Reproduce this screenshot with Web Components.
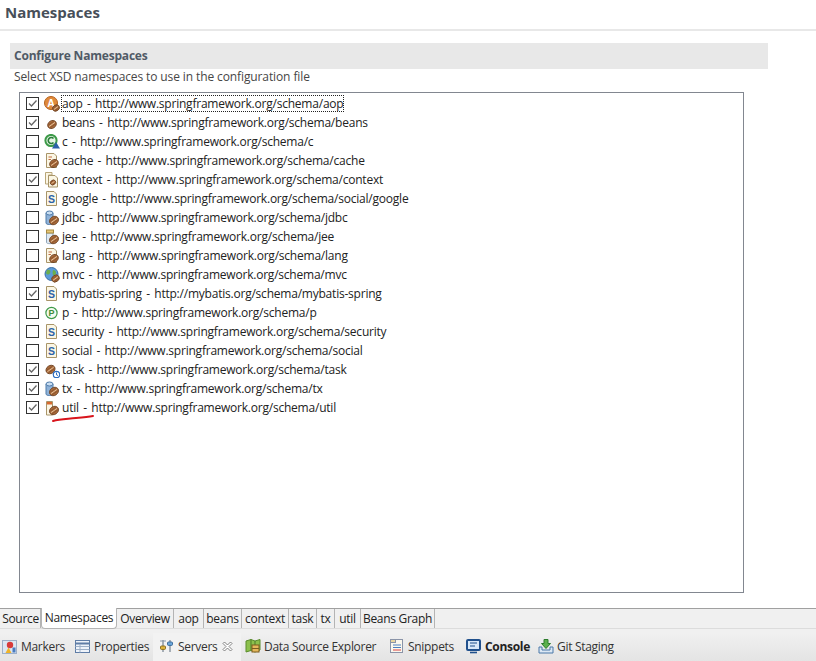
<!DOCTYPE html>
<html>
<head>
<meta charset="utf-8">
<style>
  html, body { margin: 0; padding: 0; background: #fff; }
  body { width: 816px; height: 661px; overflow: hidden; font: 12px "Open Sans", "Noto Sans CJK KR", sans-serif; color: #222; }
</style>
</head>
<body>
<ns-page>
  <ns-header>Namespaces</ns-header>
  <ns-section heading="Configure Namespaces" desc="Select XSD namespaces to use in the configuration file">
    <ns-tree>
      <ns-row name="aop" url="http://www.springframework.org/schema/aop" icon="aop" checked focused></ns-row>
      <ns-row name="beans" url="http://www.springframework.org/schema/beans" icon="bean" checked></ns-row>
      <ns-row name="c" url="http://www.springframework.org/schema/c" icon="c"></ns-row>
      <ns-row name="cache" url="http://www.springframework.org/schema/cache" icon="docbean"></ns-row>
      <ns-row name="context" url="http://www.springframework.org/schema/context" icon="context" checked></ns-row>
      <ns-row name="google" url="http://www.springframework.org/schema/social/google" icon="s"></ns-row>
      <ns-row name="jdbc" url="http://www.springframework.org/schema/jdbc" icon="db"></ns-row>
      <ns-row name="jee" url="http://www.springframework.org/schema/jee" icon="jar"></ns-row>
      <ns-row name="lang" url="http://www.springframework.org/schema/lang" icon="docbean"></ns-row>
      <ns-row name="mvc" url="http://www.springframework.org/schema/mvc" icon="globe"></ns-row>
      <ns-row name="mybatis-spring" url="http://mybatis.org/schema/mybatis-spring" icon="s" checked></ns-row>
      <ns-row name="p" url="http://www.springframework.org/schema/p" icon="p"></ns-row>
      <ns-row name="security" url="http://www.springframework.org/schema/security" icon="s"></ns-row>
      <ns-row name="social" url="http://www.springframework.org/schema/social" icon="s"></ns-row>
      <ns-row name="task" url="http://www.springframework.org/schema/task" icon="task" checked></ns-row>
      <ns-row name="tx" url="http://www.springframework.org/schema/tx" icon="db" checked></ns-row>
      <ns-row name="util" url="http://www.springframework.org/schema/util" icon="util" checked></ns-row>
    </ns-tree>
  </ns-section>
  <ns-tabs>
    <ns-tab style="width:40px">Source</ns-tab><ns-tab active style="width:76px">Namespaces</ns-tab><ns-tab style="width:57px">Overview</ns-tab><ns-tab style="width:30px">aop</ns-tab><ns-tab style="width:38px">beans</ns-tab><ns-tab style="width:47px">context</ns-tab><ns-tab style="width:28px">task</ns-tab><ns-tab style="width:18px">tx</ns-tab><ns-tab style="width:26px">util</ns-tab><ns-tab style="width:74px">Beans Graph</ns-tab>
  </ns-tabs>
  <ns-views>
    <ns-view icon="markers" style="width:73px">Markers</ns-view>
    <ns-view icon="properties" style="width:78px">Properties</ns-view>
    <ns-view icon="servers" active style="width:88px">Servers</ns-view>
    <ns-view icon="datasource" style="width:148px;padding-left:4px">Data Source Explorer</ns-view>
    <ns-view icon="snippets" style="width:77px">Snippets</ns-view>
    <ns-view icon="console" bold style="width:72px">Console</ns-view>
    <ns-view icon="git">Git Staging</ns-view>
  </ns-views>
</ns-page>

<script>
const bean = (x, y, r) => `<g transform="translate(${x} ${y}) rotate(-35)"><ellipse rx="${r}" ry="${r * 0.82}" fill="#a8693a" stroke="#6b3f20" stroke-width=".8"/><path d="M${-r + 1} 0H${r - 1}" stroke="#e6c39a" stroke-width=".9"/><path d="M${-r + 1.4} 1.6H${r - 1.4}M${-r + 1.4} -1.6H${r - 1.4}" stroke="#7c4a26" stroke-width=".6"/></g>`
const doc = '<path d="M2.5 .5H10L12.5 3V14.5H2.5Z" fill="#fbf6e4" stroke="#a89468"/>'
const sDoc = `${doc}<text x="7.5" y="12" text-anchor="middle" font-family="Liberation Sans" font-weight="700" font-size="10.5" fill="#2c63a8">S</text>`

const ICONS = {
  aop: `<circle cx="7" cy="7" r="6.5" fill="#e08a3c" stroke="#b5611c"/><text x="7" y="11" text-anchor="middle" font-family="Liberation Sans" font-weight="700" font-size="10.5" fill="#fff">A</text>${bean(12, 12, 3.6)}`,
  bean: bean(8, 9.5, 4.6),
  c: `<circle cx="7" cy="6.5" r="5.6" fill="#e6f4e6" stroke="#3c9a48" stroke-width="2"/><path d="M9.5 4.5A3 3 0 1 0 9.5 8.5" fill="none" stroke="#2a7c38" stroke-width="1.6"/><path d="M12 8L16 14.5H8Z" fill="#2c5fa8"/>`,
  docbean: `${doc}<path d="M4.5 4H8M4.5 6.5H7" stroke="#c06a40"/>${bean(10, 10.5, 4.6)}`,
  context: `<path d="M1.5 .5H8V3H4.5V12H1.5Z" fill="#fbf6e4" stroke="#b9a678"/><path d="M4.5 3.5H11L13.5 6V15H4.5Z" fill="#fbf6e4" stroke="#a89468"/>${bean(9, 10.5, 2.8)}`,
  s: sDoc,
  db: `<path d="M2 3V13C2 15 9 15 9 13V3Z" fill="#8fb2d8" stroke="#4f7aa8"/><ellipse cx="5.5" cy="3" rx="3.5" ry="2" fill="#c9def2" stroke="#4f7aa8"/>${bean(10, 10.5, 4.8)}`,
  jar: `<path d="M2.5 4V13.5C2.5 15 9 15 9 13.5V4Z" fill="#dfe9f2" stroke="#8ea4b8"/><rect x="2.5" y="1" width="7" height="3" fill="#e8c878" stroke="#a88a40"/>${bean(10, 10.5, 4.8)}`,
  globe: `<circle cx="7.5" cy="7" r="6.5" fill="#5b9bd8" stroke="#3a6ea5"/><path d="M3 3C6 2 7 4 6 6S3 8 2 6ZM9 3C12 3 13 6 11 8S8 6 9 3Z" fill="#6cae4c"/>${bean(11.5, 11.5, 4)}`,
  p: `<circle cx="7.5" cy="8" r="5.6" fill="#f4faf0" stroke="#3e9a4a" stroke-width="1.2"/><text x="7.5" y="11.3" text-anchor="middle" font-family="Liberation Sans" font-weight="700" font-size="9" fill="#3e8a3a">P</text>`,
  task: `${bean(6.5, 7.5, 4.8)}<circle cx="12.5" cy="12.5" r="3.2" fill="#fff" stroke="#2c6cc0" stroke-width="1.2"/><path d="M12.5 10.5V12.8L14 13.5" fill="none" stroke="#2c6cc0"/>`,
  util: `<path d="M2.5 1.5H8.5V15H2.5Z" fill="#fbf6e4" stroke="#a89468"/><rect x="3" y="2" width="5" height="2.5" fill="#d86a30"/>${bean(10, 10.5, 4.8)}`
}

const VIEW_ICONS = {
  markers: `<rect x=".5" y="2.5" width="14" height="13" fill="#dce6f2" stroke="#9db0c8"/><circle cx="8" cy="7" r="3.2" fill="#d83a3a"/><path d="M3.5 15L6.5 9.5L9.5 15Z" fill="#f0b428"/><rect x="10.5" y="9.5" width="3" height="5" fill="#4a7cc0"/>`,
  properties: `<rect x=".5" y="2.5" width="14" height="12" fill="#eef3fa" stroke="#5f7da6"/><path d="M.5 5.5H14.5" stroke="#5f7da6" stroke-width="2"/><path d="M.5 8.5H14.5M.5 11.5H14.5M5 6V14.5" stroke="#9db0c8"/>`,
  servers: `<path d="M4 2V14M11 2V14" stroke="#5a6a7a"/><rect x="1.5" y="8" width="5" height="3.4" rx="1" fill="#e0b43c" stroke="#8a6e20"/><rect x="8.5" y="4" width="5" height="3.4" rx="1" fill="#6ca8dc" stroke="#3c6c9c"/><path d="M1 3H7" stroke="#8a9aaa"/>`,
  datasource: `<path d="M1 3L6 1.5L10 3L15 1.5V12L10 14L6 12.5L1 14Z" fill="#8cc04c" stroke="#5a8c2c"/><path d="M6 1.5V12.5M10 3V14" stroke="#4c7c28"/><rect x="7" y="7" width="7" height="7" fill="#e4b85c" stroke="#7c5c20"/><path d="M7 10.5H14" stroke="#7c5c20"/>`,
  snippets: `<rect x="1.5" y="1.5" width="12" height="13" fill="#fbf8ee" stroke="#8a94a8"/><rect x="1.5" y="1.5" width="5" height="3" fill="#e8d6a0" stroke="#8a94a8"/><path d="M4 7H12M4 9.5H12" stroke="#4a80c0"/><path d="M4 12H12" stroke="#d84040"/>`,
  console: `<rect x="1" y="2" width="13" height="10" rx="1" fill="#d8e8f8" stroke="#20508c" stroke-width="2"/><path d="M4 5H11M4 8H9" stroke="#20508c"/><path d="M4 14.5H11" stroke="#20508c" stroke-width="1.6"/>`,
  git: `<path d="M1 9V15H15V9H12V12H4V9Z" fill="#dce8f4" stroke="#4a78a8"/><path d="M6 1.5H10V5.5H12.5L8 10.5L3.5 5.5H6Z" fill="#5cb04c" stroke="#2c7c2c"/>`
}

class NsPage extends HTMLElement {
  constructor() {
    super()
    this.attachShadow({ mode: 'open' })
    this.shadowRoot.innerHTML = `
      <style>
        :host { display: flex; flex-direction: column; width: 816px; height: 661px; position: relative; }
        svg { position: absolute; left: 0; top: 0; pointer-events: none; }
      </style>
      <slot></slot>
      <svg width="816" height="661"><path d="M53 421C60 419 68 419 76 418C82 417.5 88 417 93 416" fill="none" stroke="#d8141c" stroke-width="2" stroke-linecap="round"/></svg>
    `
  }
}

class NsHeader extends HTMLElement {
  constructor() {
    super()
    this.attachShadow({ mode: 'open' })
    this.shadowRoot.innerHTML = `
      <style>
        :host { display: flex; align-items: center; box-sizing: border-box; height: 31px; padding: 0 0 5px 5px; border-bottom: 2px solid #e8e8e8;
                font-weight: 700; font-size: 15px; color: #474f59; }
      </style>
      <slot></slot>
    `
  }
}

class NsSection extends HTMLElement {
  constructor() {
    super()
    this.attachShadow({ mode: 'open' })
    this.shadowRoot.innerHTML = `
      <style>
        :host { display: flex; flex-direction: column; flex: 1; padding: 12px 0 0 10px; min-height: 0; }
        .heading { width: 758px; height: 26px; box-sizing: border-box; padding: 0 0 2px 4px; display: flex; align-items: center; background: #e8e8e8; font-weight: 700; color: #505a66; letter-spacing: -.2px; }
        .desc { height: 23px; box-sizing: border-box; padding: 0 0 8px 4px; display: flex; align-items: center; color: #464646; letter-spacing: -.11px; }
        ::slotted(ns-tree) { margin-left: 9px; }
      </style>
      <div class="heading"></div>
      <div class="desc"></div>
      <slot></slot>
    `
  }
  connectedCallback() {
    this.shadowRoot.querySelector('.heading').textContent = this.getAttribute('heading')
    this.shadowRoot.querySelector('.desc').textContent = this.getAttribute('desc')
  }
}

class NsTree extends HTMLElement {
  constructor() {
    super()
    this.attachShadow({ mode: 'open' })
    this.shadowRoot.innerHTML = `
      <style>
        :host { display: flex; flex-direction: column; box-sizing: border-box; width: 725px; height: 501px; border: 1px solid #828790; padding-top: 1px; }
      </style>
      <slot></slot>
    `
  }
}

class NsRow extends HTMLElement {
  constructor() {
    super()
    this.attachShadow({ mode: 'open' })
    this.shadowRoot.innerHTML = `
      <style>
        :host { display: flex; align-items: center; height: 19px; padding-left: 6px; color: #222; white-space: nowrap; letter-spacing: -.22px; word-spacing: 1.5px; }
        .box { width: 13px; height: 13px; box-sizing: border-box; border: 1px solid #333; background: #fff; flex: none; display: flex; }
        svg.icon { width: 16px; height: 16px; margin-left: 5px; margin-right: 1px; flex: none; }
        .label { border: 1px solid transparent; line-height: 15px; }
        :host([focused]) .label { border: 1px dotted #222; }
      </style>
      <span class="box"></span>
      <svg class="icon" viewBox="0 0 16 16"></svg>
      <span class="label"></span>
    `
  }
  connectedCallback() {
    const root = this.shadowRoot
    if (this.hasAttribute('checked')) {
      root.querySelector('.box').innerHTML = '<svg width="11" height="11" viewBox="0 0 11 11"><path d="M2 5.5L4.5 8L9.5 2.5" fill="none" stroke="#666" stroke-width="1.3"/></svg>'
    }
    root.querySelector('svg.icon').innerHTML = ICONS[this.getAttribute('icon')]
    root.querySelector('.label').textContent = `${this.getAttribute('name')} - ${this.getAttribute('url')}`
  }
}

class NsTabs extends HTMLElement {
  constructor() {
    super()
    this.attachShadow({ mode: 'open' })
    this.shadowRoot.innerHTML = `
      <style>
        :host { display: flex; box-sizing: border-box; height: 21px; padding-left: 1px; background: #f0f0f0; border-top: 1px solid #a0a0a0; border-bottom: 1px solid #dcdcdc; flex: none; letter-spacing: -.3px; }
      </style>
      <slot></slot>
    `
  }
}

class NsTab extends HTMLElement {
  constructor() {
    super()
    this.attachShadow({ mode: 'open' })
    this.shadowRoot.innerHTML = `
      <style>
        :host { display: flex; align-items: center; justify-content: center; box-sizing: border-box; height: 19px; padding-bottom: 1px; border-right: 1px solid #b4b4b4; color: #222; white-space: nowrap; }
        :host([active]) { background: #fff; margin-top: -1px; height: 21px; border-radius: 0 0 4px 4px; border-left: 1px solid #b4b4b4; border-bottom: 1px solid #b4b4b4; position: relative; }
      </style>
      <slot></slot>
    `
  }
}

class NsViews extends HTMLElement {
  constructor() {
    super()
    this.attachShadow({ mode: 'open' })
    this.shadowRoot.innerHTML = `
      <style>
        :host { display: flex; align-items: stretch; height: 32px; box-sizing: border-box; padding-left: 2px; border-top: 4px solid #f0f0f0; background: linear-gradient(#f0f0f0, #e4e4e4); flex: none; letter-spacing: -.3px; }
      </style>
      <slot></slot>
    `
  }
}

class NsView extends HTMLElement {
  constructor() {
    super()
    this.attachShadow({ mode: 'open' })
    this.shadowRoot.innerHTML = `
      <style>
        :host { display: flex; align-items: center; box-sizing: border-box; padding: 0 0 2px 0; gap: 3px; color: #333; white-space: nowrap; }
        :host([active]) { background: #f2f2f2; padding: 0 8px 2px 6px; }
        :host([bold]) { font-weight: 700; color: #222; }
        svg { width: 16px; height: 16px; flex: none; }
        .close { display: none; width: 11px; height: 11px; margin-left: auto; }
        :host([active]) .close { display: block; }
      </style>
      <svg viewBox="0 0 16 16" class="glyph"></svg>
      <slot></slot>
      <svg class="close" viewBox="0 0 11 11"><path d="M1 2.5L2.5 1L5.5 4L8.5 1L10 2.5L7 5.5L10 8.5L8.5 10L5.5 7L2.5 10L1 8.5L4 5.5Z" fill="#fff" stroke="#666" stroke-width=".8"/></svg>
    `
  }
  connectedCallback() {
    this.shadowRoot.querySelector('.glyph').innerHTML = VIEW_ICONS[this.getAttribute('icon')]
  }
}

customElements.define('ns-page', NsPage)
customElements.define('ns-header', NsHeader)
customElements.define('ns-section', NsSection)
customElements.define('ns-tree', NsTree)
customElements.define('ns-row', NsRow)
customElements.define('ns-tabs', NsTabs)
customElements.define('ns-tab', NsTab)
customElements.define('ns-views', NsViews)
customElements.define('ns-view', NsView)
</script>
</body>
</html>
